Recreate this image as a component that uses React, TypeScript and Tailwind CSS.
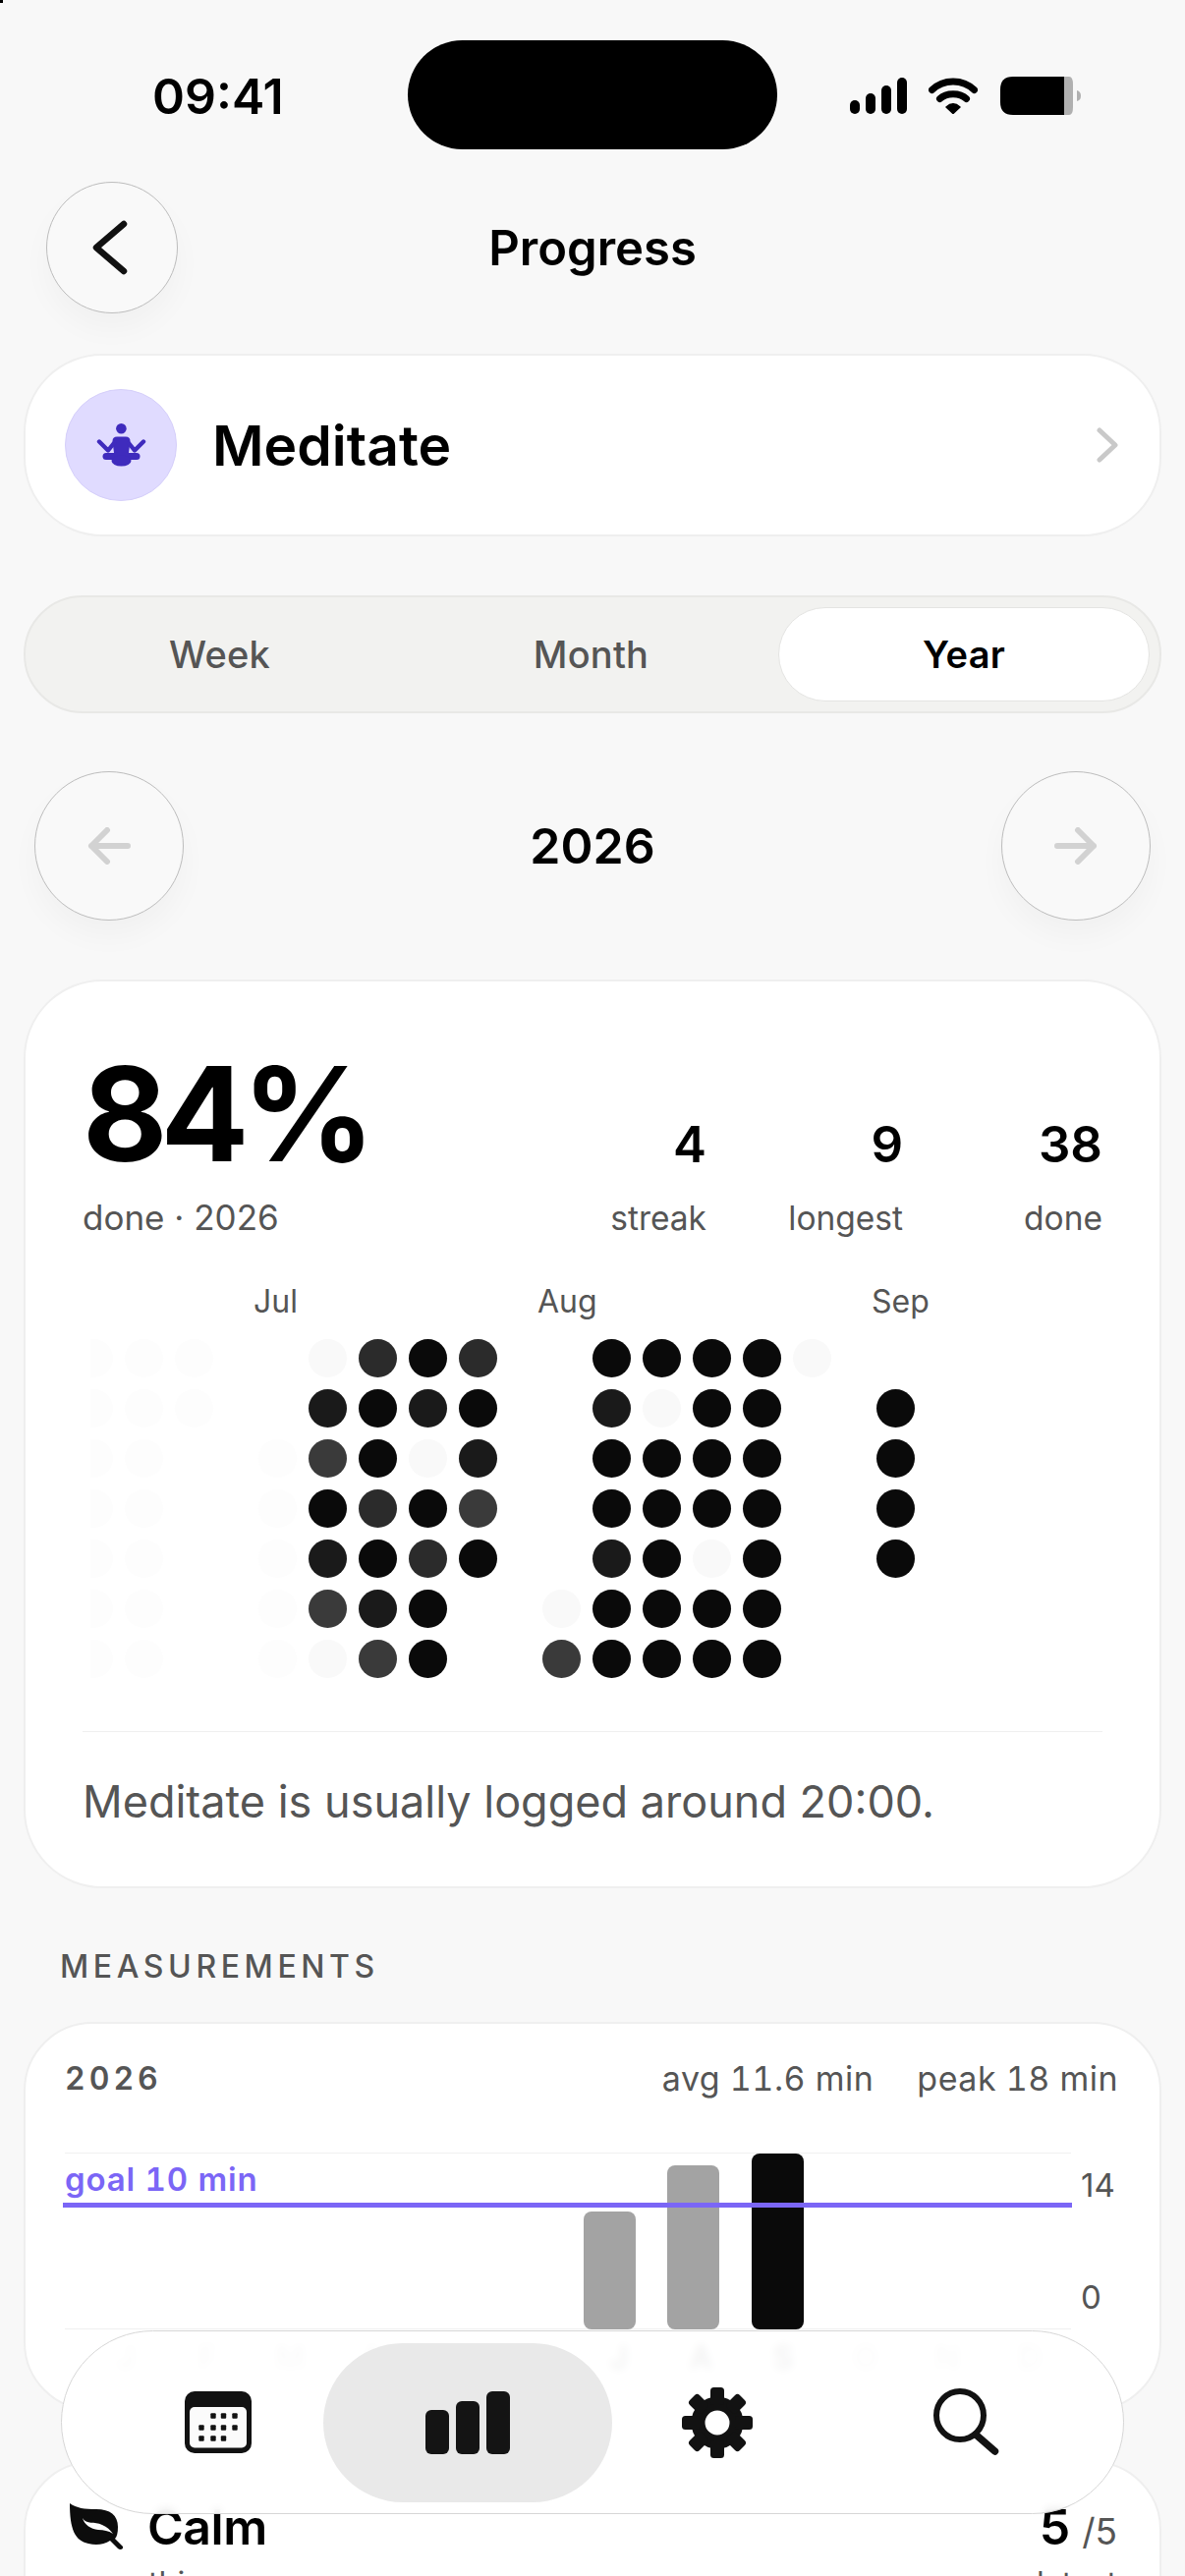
const DOT: Record<string, string> = {
  '.': 'bg-transparent',
  f: 'bg-[#fdfdfd]',
  e: 'bg-[#f9f9f9]',
  a: 'bg-[#0a0a0a]',
  b: 'bg-[#1a1a1a]',
  c: 'bg-[#2b2b2b]',
  d: 'bg-[#3a3a3a]',
};

const MONTHS = [
  { label: '', cols: ['fffffff', 'fffffff', 'ff.....'] },
  { label: 'Jul', cols: ['..fffff', 'ebdabde', 'caacabd', 'abeacaa', 'cabda..'] },
  { label: 'Aug', cols: ['.....ed', 'abaabaa', 'aeaaaaa', 'aaaaeaa', 'aaaaaaa', 'e......'] },
  { label: 'Sep', cols: ['.aaaa..'] },
];

const BAR_MONTHS = ['J', 'F', 'M', 'A', 'M', 'J', 'J', 'A', 'S', 'O', 'N', 'D'];
const BAR_CLASS: Record<number, string> = {
  6: 'h-[120px] bg-[#a3a3a3]',
  7: 'h-[167px] bg-[#a3a3a3]',
  8: 'h-[179px] bg-[#0a0a0a]',
};

function Signal() {
  return (
    <svg width="58" height="37" viewBox="0 0 58 37" fill="#000">
      <rect x="0" y="23" width="10" height="14" rx="5" />
      <rect x="16" y="16" width="10" height="21" rx="5" />
      <rect x="32" y="8" width="10" height="29" rx="5" />
      <rect x="48" y="0" width="10" height="37" rx="5" />
    </svg>
  );
}

function Wifi() {
  return (
    <svg width="50" height="37" viewBox="0 0 50 37" fill="none" stroke="#000" strokeLinecap="round">
      <path d="M3.5 12.5C15 1 35 1 46.5 12.5" strokeWidth="7" />
      <path d="M11.5 21.5C18 15 32 15 38.5 21.5" strokeWidth="7" />
      <path d="M18 30Q25 23.5 32 30L25 36.5Z" fill="#000" stroke="#000" strokeWidth="1.5" strokeLinejoin="round" />
    </svg>
  );
}

function Battery() {
  return (
    <svg width="82" height="39" viewBox="0 0 82 39">
      <path d="M65 0H70Q74 0 74 8V31Q74 39 70 39H65Z" fill="#b0b0b0" />
      <path d="M13 0H65V39H13Q0 39 0 26V13Q0 0 13 0Z" fill="#000" />
      <path d="M78 14Q82 15 82 19.5Q82 24 78 25Z" fill="#b0b0b0" />
    </svg>
  );
}

function Meditation() {
  return (
    <svg width="51" height="44" viewBox="0 0 51 44" fill="#3f2bbd">
      <circle cx="25.4" cy="5.3" r="5.3" />
      <path d="M21 13.5H30Q34.5 13.5 34.5 18L32.5 34H18.5L16.5 18Q16.5 13.5 21 13.5Z" />
      <path d="M3 18.5L12 27.5L18 20M48 18.5L39 27.5L33 20" fill="none" stroke="#3f2bbd" strokeWidth="4.4" strokeLinecap="round" strokeLinejoin="round" />
      <path d="M10 33.5H41" stroke="#3f2bbd" strokeWidth="7" strokeLinecap="round" />
      <ellipse cx="25.5" cy="38" rx="10" ry="5.6" />
    </svg>
  );
}

function CalendarIcon() {
  const cells = [
    [29, 25], [39.5, 25], [51, 25],
    [17, 37], [29, 37], [39.5, 37], [51, 37],
    [17, 48], [29, 48], [39.5, 48],
  ];
  return (
    <svg width="68" height="63" viewBox="0 0 68 63">
      <rect width="68" height="63" rx="10" fill="#121212" />
      <rect x="5" y="16" width="58" height="41.5" rx="5" fill="#fbfbfb" />
      {cells.map(([x, y]) => (
        <rect key={`${x}-${y}`} x={x - 2.7} y={y - 2.7} width="5.4" height="5.4" rx="1" fill="#121212" />
      ))}
    </svg>
  );
}

function ChartIcon() {
  return (
    <svg width="86" height="64" viewBox="0 0 86 64" fill="#141414">
      <rect x="0" y="19" width="24" height="45" rx="6" />
      <rect x="31" y="10" width="24" height="54" rx="6" />
      <rect x="62" y="0" width="24" height="64" rx="6" />
    </svg>
  );
}

function GearIcon() {
  return (
    <svg width="72" height="72" viewBox="0 0 72 72" fill="#121212">
      <circle cx="36" cy="36" r="19.5" fill="none" stroke="#121212" strokeWidth="14" />
      {[0, 45, 90, 135, 180, 225, 270, 315].map((a) => (
        <rect key={a} x="29" y="0" width="14" height="18" rx="3.5" transform={`rotate(${a} 36 36)`} />
      ))}
    </svg>
  );
}

function SearchIcon() {
  return (
    <svg width="68" height="70" viewBox="0 0 68 70" fill="none" stroke="#121212" strokeLinecap="round">
      <ellipse cx="27" cy="27.5" rx="24" ry="24.5" strokeWidth="6" />
      <path d="M43 47L62.5 64" strokeWidth="7.5" />
    </svg>
  );
}

function Leaf() {
  return (
    <svg width="56" height="48" viewBox="0 0 56 48">
      <path d="M1 0C8 5 16 6 28 6C42 6 50 12 50 24C50 30 49 34 47 36L55 44C56 47 52 48 50 46L42 38C36 42 28 43 20 41C6 38 1 26 1 0Z" fill="#0c0c0c" />
      <path d="M14 15C18 22 26 18 34 22C39 24 42 27 45 31C40 28 36 27 30 27C22 26 16 22 14 15Z" fill="#fff" />
    </svg>
  );
}

export default function App() {
  return (
    <div className="relative h-[2622px] w-[1206px] overflow-hidden bg-[#f8f8f8] font-[Inter,sans-serif] text-black">
      <div className="absolute left-0 top-0 size-[3px] bg-black" />

      <div className="grid grid-cols-[415px_376px_1fr] pt-[41px]">
        <div className="flex h-[111px] items-center pl-[155px] pt-[2px] text-[50px] font-semibold leading-none">09:41</div>
        <div className="h-[111px] rounded-[56px] bg-black" />
        <div className="flex h-[111px] items-center pl-[74px] pt-[2px]">
          <Signal />
          <div className="ml-[22px]"><Wifi /></div>
          <div className="ml-[23px]"><Battery /></div>
        </div>
      </div>

      <div className="mt-[33px] grid grid-cols-[134px_1fr_134px] items-center px-[47px]">
        <button className="flex size-[134px] items-center justify-center rounded-full border border-[#bdbdbd] bg-[#f9f9f9] shadow-[0_16px_30px_rgba(0,0,0,0.03)]">
          <svg width="36" height="56" viewBox="0 0 36 56" fill="none" stroke="#111" strokeWidth="6.5" strokeLinecap="round" strokeLinejoin="round" className="-ml-[5px]">
            <path d="M32 4L4 28L32 52" />
          </svg>
        </button>
        <div className="text-center text-[49px] font-semibold leading-none">Progress</div>
        <div />
      </div>

      <div className="mx-[24px] mt-[41px] flex h-[186px] items-center rounded-[80px] border-2 border-[#efefef] bg-white pl-[40px] pr-[42px]">
        <div className="flex size-[114px] items-center justify-center rounded-full border border-[#d5cffa] bg-[#e0dbff]">
          <Meditation />
        </div>
        <div className="ml-[36px] flex-1 text-[57px] font-semibold leading-none">Meditate</div>
        <svg width="22" height="36" viewBox="0 0 22 36" fill="none" stroke="#c9c9c9" strokeWidth="5" strokeLinecap="round" strokeLinejoin="round">
          <path d="M3 3L19 18L3 33" />
        </svg>
      </div>

      <div className="mx-[24px] mt-[60px] grid h-[120px] grid-cols-3 rounded-[60px] border-2 border-[#e8e8e6] bg-[#f2f2f0] p-[10px] text-[38px] font-medium leading-none tracking-[0.2px] text-[#555]">
        <div className="flex items-center justify-center pr-[3px]">Week</div>
        <div className="flex items-center justify-center pr-[3px]">Month</div>
        <div className="flex items-center justify-center rounded-[48px] border border-[#e4e4e2] bg-white font-semibold text-black">Year</div>
      </div>

      <div className="mt-[59px] grid grid-cols-[152px_1fr_152px] items-center px-[35px]">
        <button className="flex size-[152px] items-center justify-center rounded-full border border-[#bdbdbd] bg-[#f9f9f9] shadow-[0_16px_30px_rgba(0,0,0,0.03)]">
          <svg width="44" height="38" viewBox="0 0 44 38" fill="none" stroke="#d2d2d2" strokeWidth="6" strokeLinecap="round" strokeLinejoin="round">
            <path d="M41 19H4M20 3L4 19L20 35" />
          </svg>
        </button>
        <div className="text-center text-[50px] font-semibold leading-none">2026</div>
        <button className="flex size-[152px] items-center justify-center rounded-full border border-[#bdbdbd] bg-[#f9f9f9] shadow-[0_16px_30px_rgba(0,0,0,0.03)]">
          <svg width="44" height="38" viewBox="0 0 44 38" fill="none" stroke="#d2d2d2" strokeWidth="6" strokeLinecap="round" strokeLinejoin="round">
            <path d="M3 19H40M24 3L40 19L24 35" />
          </svg>
        </button>
      </div>

      <div className="mx-[24px] mt-[60px] h-[925px] rounded-[80px] border-2 border-[#efefef] bg-white px-[58px] pt-[68px]">
        <div className="flex h-[195px] items-start justify-between">
          <div>
            <div className="text-[133px] font-bold leading-[133px] tracking-[-7px]">84%</div>
            <div className="mt-[19px] text-[35px] leading-[40px] text-[#555]">done · 2026</div>
          </div>
          <div className="grid grid-cols-[200px_200px_203px] pt-[73px] text-right">
            {[['4', 'streak'], ['9', 'longest'], ['38', 'done']].map(([v, l]) => (
              <div key={l}>
                <div className="text-[51px] font-semibold leading-[50px]">{v}</div>
                <div className="mt-[30px] text-[33.5px] leading-[40px] text-[#555]">{l}</div>
              </div>
            ))}
          </div>
        </div>

        <div className="ml-[8px] mt-[43px] overflow-hidden">
          <div className="-ml-[16px] flex gap-[46px]">
            {MONTHS.map((m) => (
              <div key={m.label || 'Jun'} className="shrink-0">
                <div className="-ml-[5px] h-[40px] text-[32px] leading-[40px] text-[#555]">{m.label}</div>
                <div className="mt-[18px] flex gap-[12px]">
                  {m.cols.map((col, i) => (
                    <div key={i} className="flex flex-col gap-[12px]">
                      {col.split('').map((c, j) => (
                        <div key={j} className={`size-[39px] rounded-full ${DOT[c]}`} />
                      ))}
                    </div>
                  ))}
                </div>
              </div>
            ))}
          </div>
        </div>

        <div className="mt-[54px] h-px bg-[#f0f0f0]" />
        <div className="mt-[46px] text-[45px] leading-[50px] text-[#555]">Meditate is usually logged around 20:00.</div>
      </div>

      <div className="ml-[61px] mt-[60px] text-[32px] font-medium leading-[40px] tracking-[4.6px] text-[#555]">MEASUREMENTS</div>

      <div className="mx-[24px] mt-[36px] h-[396px] rounded-[70px] border-2 border-[#efefef] bg-white px-[40px] pt-[36px]">
        <div className="flex items-center justify-between text-[34px] leading-[40px] tabular-nums tracking-[0.5px] text-[#555]">
          <div className="text-[32px] font-semibold tracking-[4px]">2026</div>
          <div className="flex gap-[44px] pr-[2px]">
            <span>avg 11.6 min</span>
            <span>peak 18 min</span>
          </div>
        </div>
        <div className="mt-[55px] flex">
          <div className="w-[1024px] shrink-0">
            <div className="relative h-[180px] border-y border-[#f0f0f0]">
              <div className="absolute -left-[2px] -right-[1px] top-[50px] z-10 h-[5px] bg-[#7b66f6]" />
              <div className="absolute left-0 top-[6px] text-[33px] font-semibold leading-[40px] tabular-nums tracking-[0.8px] text-[#7b66f6]">goal 10 min</div>
              <div className="grid h-full grid-cols-12 items-end">
                {BAR_MONTHS.map((_, i) => (
                  <div key={i} className="flex justify-center">
                    {BAR_CLASS[i] && <div className={`w-[53px] rounded-[8px] ${BAR_CLASS[i]}`} />}
                  </div>
                ))}
              </div>
            </div>
            <div className="mt-[9px] grid grid-cols-12 pl-[20px] text-[32px] font-semibold leading-[40px]">
              {BAR_MONTHS.map((m, i) => (
                <div key={i} className={BAR_CLASS[i] ? 'text-center text-[#777]' : 'text-center text-[#cfcfcf]'}>{m}</div>
              ))}
            </div>
          </div>
          <div className="flex h-[180px] flex-col justify-between py-[13px] pl-[10px] text-[33px] leading-[40px] text-[#555]">
            <div>14</div>
            <div>0</div>
          </div>
        </div>
      </div>

      <div className="mx-[24px] mt-[51px] h-[300px] rounded-[70px] border-2 border-[#efefef] bg-white pl-[44px] pr-[43px] pt-[40px]">
        <div className="flex items-center justify-between">
          <div className="flex items-center gap-[24px]">
            <Leaf />
            <div className="text-[50px] font-semibold leading-[50px] tracking-[-0.5px]">Calm</div>
          </div>
          <div className="flex items-baseline gap-[12px]">
            <span className="text-[50px] font-semibold leading-[50px]">5</span>
            <span className="text-[37px] leading-[40px] text-[#555]">/5</span>
          </div>
        </div>
        <div className="mt-[13px] flex justify-between pl-[81px] text-[32px] leading-[40px] text-[#555]">
          <span>this year</span>
          <span>latest</span>
        </div>
      </div>

      <div className="absolute left-[62px] top-[2372px] z-20 grid h-[187px] w-[1082px] grid-cols-4 items-center rounded-[94px] border border-[#d6d6d6] bg-white/90 px-[32px] backdrop-blur-[4px]">
        <div className="flex items-center justify-center"><CalendarIcon /></div>
        <div className="flex items-center justify-center">
          <div className="flex h-[162px] w-[294px] shrink-0 items-center justify-center rounded-[81px] bg-[#e9e9e9]"><ChartIcon /></div>
        </div>
        <div className="flex items-center justify-center"><GearIcon /></div>
        <div className="flex items-center justify-center"><SearchIcon /></div>
      </div>
    </div>
  );
}
